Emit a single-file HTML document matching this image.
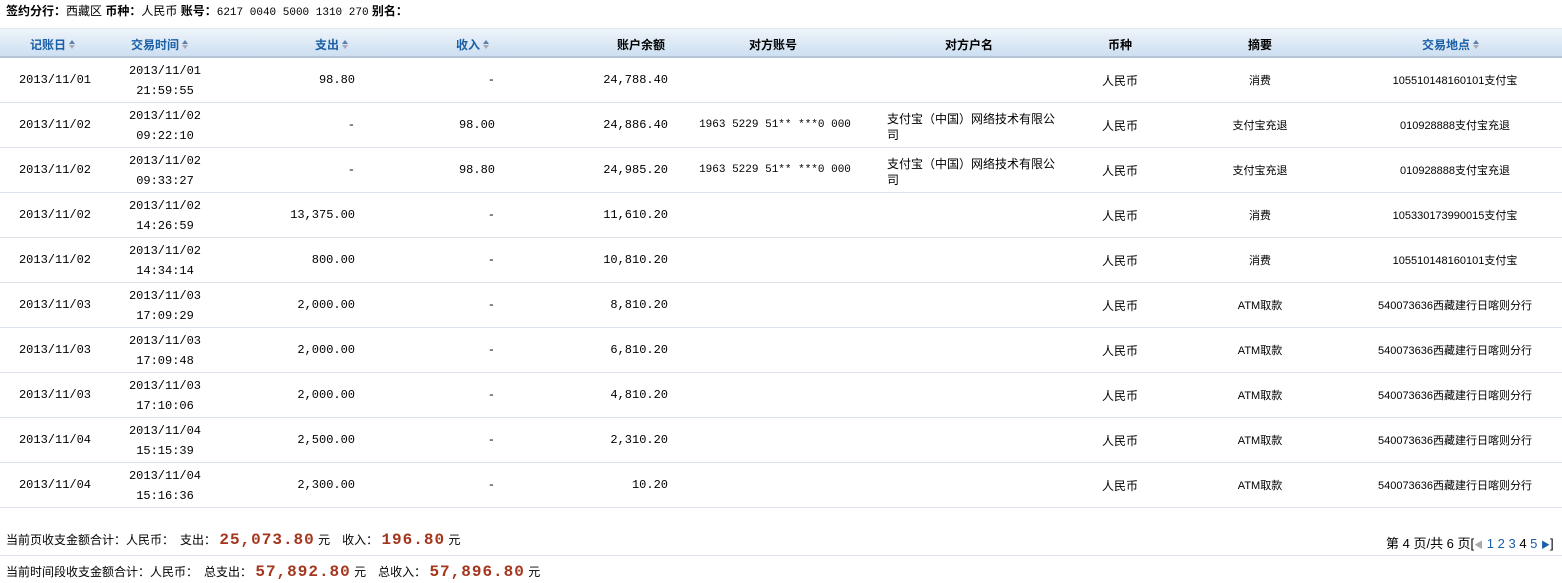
<!DOCTYPE html>
<html><head><meta charset="utf-8"><style>
body{margin:0;width:1562px;height:583px;background:#fff;font-family:"Liberation Sans","WenQuanYi Zen Hei","Noto Sans CJK SC",sans-serif;font-size:12px;color:#000;position:relative;overflow:hidden}
.a{position:absolute;white-space:nowrap}
.m{font-family:"Liberation Mono","WenQuanYi Zen Hei",monospace;font-size:12px}
.hdr{position:absolute;left:0;top:28px;width:1562px;height:30px;background:linear-gradient(#eef4fa,#cddff1);border-top:1px solid #e3e9f0;border-bottom:2px solid #b4c4d6;box-sizing:border-box}
.h{position:absolute;top:36px;font-weight:bold;font-size:12px}
.b{color:#1b5fa6}
.arr{display:inline-block;width:7px;height:10px;vertical-align:-1px;margin-left:3px;position:relative}
.arr:before{content:"";position:absolute;left:0;top:0;border-left:3.5px solid transparent;border-right:3.5px solid transparent;border-bottom:4px solid #5a7fa8}
.arr:after{content:"";position:absolute;left:0;top:5px;border-left:3.5px solid transparent;border-right:3.5px solid transparent;border-top:4px solid #aab}
.row{position:absolute;left:0;width:1562px;height:45px;border-bottom:1px solid #dde3ea;box-sizing:border-box}
.c{position:absolute;text-align:center}
.r{position:absolute;text-align:right}
.red{color:#a3361d;font-weight:bold;font-size:16px;letter-spacing:1px;font-family:"Liberation Mono",monospace}
</style></head><body>
<div class="a" style="left:6px;top:2px;font-size:12px"><b>签约分行：</b>西藏区 <b>币种：</b>人民币 <b>账号：</b><span class="m" style="font-size:11px">6217 0040 5000 1310 270</span> <b>别名：</b></div>
<div class="hdr"></div>
<div class="h b" style="left:30px">记账日<span class="arr"></span></div>
<div class="h b" style="left:131px">交易时间<span class="arr"></span></div>
<div class="h b" style="left:315px">支出<span class="arr"></span></div>
<div class="h b" style="left:456px">收入<span class="arr"></span></div>
<div class="h" style="left:617px">账户余额</div>
<div class="h" style="left:749px">对方账号</div>
<div class="h" style="left:945px">对方户名</div>
<div class="h" style="left:1108px">币种</div>
<div class="h" style="left:1248px">摘要</div>
<div class="h b" style="left:1422px">交易地点<span class="arr"></span></div>
<div id="rows"></div>
<script>
var d=[["2013/11/01","2013/11/01","21:59:55","98.80","-","24,788.40","","","消费","105510148160101支付宝"],
["2013/11/02","2013/11/02","09:22:10","-","98.00","24,886.40","1963 5229 51** ***0 000","1","支付宝充退","010928888支付宝充退"],
["2013/11/02","2013/11/02","09:33:27","-","98.80","24,985.20","1963 5229 51** ***0 000","1","支付宝充退","010928888支付宝充退"],
["2013/11/02","2013/11/02","14:26:59","13,375.00","-","11,610.20","","","消费","105330173990015支付宝"],
["2013/11/02","2013/11/02","14:34:14","800.00","-","10,810.20","","","消费","105510148160101支付宝"],
["2013/11/03","2013/11/03","17:09:29","2,000.00","-","8,810.20","","","ATM取款","540073636西藏建行日喀则分行"],
["2013/11/03","2013/11/03","17:09:48","2,000.00","-","6,810.20","","","ATM取款","540073636西藏建行日喀则分行"],
["2013/11/03","2013/11/03","17:10:06","2,000.00","-","4,810.20","","","ATM取款","540073636西藏建行日喀则分行"],
["2013/11/04","2013/11/04","15:15:39","2,500.00","-","2,310.20","","","ATM取款","540073636西藏建行日喀则分行"],
["2013/11/04","2013/11/04","15:16:36","2,300.00","-","10.20","","","ATM取款","540073636西藏建行日喀则分行"]];
var h="";
for(var i=0;i<d.length;i++){var r=d[i],t=58+i*45;
h+='<div class="row" style="top:'+t+'px">'+
'<div class="c m" style="left:0;width:110px;top:15px">'+r[0]+'</div>'+
'<div class="c m" style="left:110px;width:110px;top:3px;line-height:20px">'+r[1]+'<br>'+r[2]+'</div>'+
'<div class="r m" style="right:1207px;top:15px">'+r[3]+'</div>'+
'<div class="r m" style="right:1067px;top:15px">'+r[4]+'</div>'+
'<div class="r m" style="right:894px;top:15px">'+r[5]+'</div>'+
'<div class="c m" style="left:690px;width:170px;top:16px;font-size:11px">'+r[6]+'</div>'+
(r[7]?'<div class="a" style="left:887px;top:8px;line-height:16px">支付宝（中国）网络技术有限公<br>司</div>':'')+
'<div class="c" style="left:1070px;width:100px;top:14px">人民币</div>'+
'<div class="c" style="left:1200px;width:120px;top:14px;font-size:11px">'+r[8]+'</div>'+
'<div class="c" style="left:1355px;width:200px;top:14px;font-size:11px">'+r[9]+'</div>'+
'</div>';}
document.getElementById("rows").innerHTML=h;
</script>
<div class="a" style="left:6px;top:531px">当前页收支金额合计：人民币：　支出：&nbsp;<span class="red">25,073.80</span> 元　收入：&nbsp;<span class="red">196.80</span> 元</div>
<div class="a" style="left:1386px;top:533px;font-size:13px">第 4 页/共 6 页[<span style="color:#aaa;font-size:9px">◀</span> <span style="color:#1b5fa6">1 2 3</span> 4 <span style="color:#1b5fa6">5</span> <span style="font-size:9px;color:#1b5fa6">▶</span>]</div>
<div style="position:absolute;left:0;top:555px;width:1562px;height:1px;background:#dde3ea"></div>
<div class="a" style="left:6px;top:563px">当前时间段收支金额合计：人民币：　总支出：&nbsp;<span class="red">57,892.80</span> 元　总收入：&nbsp;<span class="red">57,896.80</span> 元</div>
</body></html>
